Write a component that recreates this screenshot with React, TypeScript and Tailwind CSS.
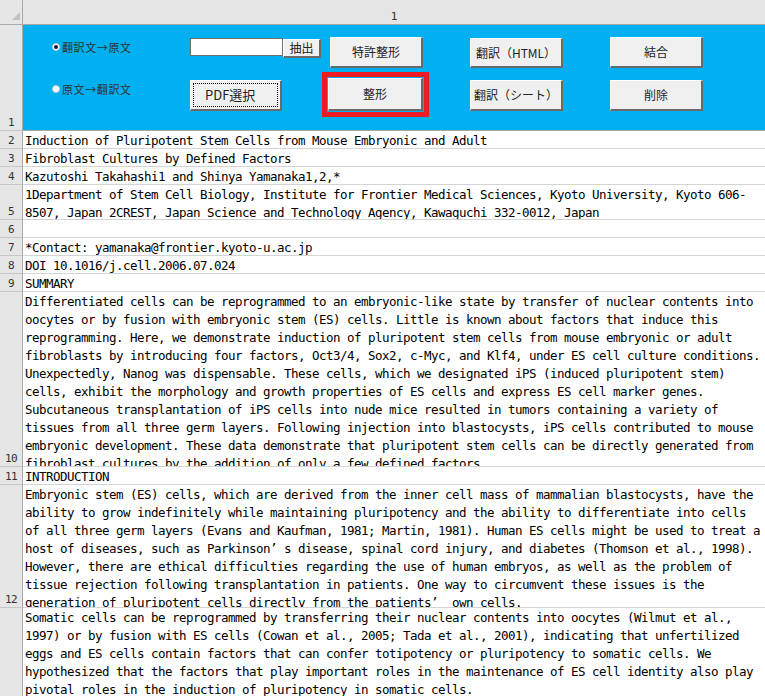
import React from 'react';

const summary = [
  'Differentiated cells can be reprogrammed to an embryonic-like state by transfer of nuclear contents into',
  'oocytes or by fusion with embryonic stem (ES) cells. Little is known about factors that induce this',
  'reprogramming. Here, we demonstrate induction of pluripotent stem cells from mouse embryonic or adult',
  'fibroblasts by introducing four factors, Oct3/4, Sox2, c-Myc, and Klf4, under ES cell culture conditions.',
  'Unexpectedly, Nanog was dispensable. These cells, which we designated iPS (induced pluripotent stem)',
  'cells, exhibit the morphology and growth properties of ES cells and express ES cell marker genes.',
  'Subcutaneous transplantation of iPS cells into nude mice resulted in tumors containing a variety of',
  'tissues from all three germ layers. Following injection into blastocysts, iPS cells contributed to mouse',
  'embryonic development. These data demonstrate that pluripotent stem cells can be directly generated from',
  'fibroblast cultures by the addition of only a few defined factors.',
];

const intro1 = [
  'Embryonic stem (ES) cells, which are derived from the inner cell mass of mammalian blastocysts, have the',
  'ability to grow indefinitely while maintaining pluripotency and the ability to differentiate into cells',
  'of all three germ layers (Evans and Kaufman, 1981; Martin, 1981). Human ES cells might be used to treat a',
  'host of diseases, such as Parkinson’ s disease, spinal cord injury, and diabetes (Thomson et al., 1998).',
  'However, there are ethical difficulties regarding the use of human embryos, as well as the problem of',
  'tissue rejection following transplantation in patients. One way to circumvent these issues is the',
  'generation of pluripotent cells directly from the patients’  own cells.',
];

const intro2 = [
  'Somatic cells can be reprogrammed by transferring their nuclear contents into oocytes (Wilmut et al.,',
  '1997) or by fusion with ES cells (Cowan et al., 2005; Tada et al., 2001), indicating that unfertilized',
  'eggs and ES cells contain factors that can confer totipotency or pluripotency to somatic cells. We',
  'hypothesized that the factors that play important roles in the maintenance of ES cell identity also play',
  'pivotal roles in the induction of pluripotency in somatic cells.',
];

const rows: { n: number; h: string; lines: string[] }[] = [
  { n: 2, h: 'h-[18px]', lines: ['Induction of Pluripotent Stem Cells from Mouse Embryonic and Adult'] },
  { n: 3, h: 'h-[18px]', lines: ['Fibroblast Cultures by Defined Factors'] },
  { n: 4, h: 'h-[18px]', lines: ['Kazutoshi Takahashi1 and Shinya Yamanaka1,2,*'] },
  {
    n: 5,
    h: 'h-[35px]',
    lines: [
      '1Department of Stem Cell Biology, Institute for Frontier Medical Sciences, Kyoto University, Kyoto 606-',
      '8507, Japan 2CREST, Japan Science and Technology Agency, Kawaguchi 332-0012, Japan',
    ],
  },
  { n: 6, h: 'h-[18px]', lines: [''] },
  { n: 7, h: 'h-[18px]', lines: ['*Contact: yamanaka@frontier.kyoto-u.ac.jp'] },
  { n: 8, h: 'h-[18px]', lines: ['DOI 10.1016/j.cell.2006.07.024'] },
  { n: 9, h: 'h-[18px]', lines: ['SUMMARY'] },
  { n: 10, h: 'h-[175px]', lines: summary },
  { n: 11, h: 'h-[18px]', lines: ['INTRODUCTION'] },
  { n: 12, h: 'h-[123px]', lines: intro1 },
  { n: 13, h: 'h-[120px]', lines: intro2 },
];

const Btn = ({ label, className }: { label: string; className: string }) => (
  <div
    className={`flex items-center justify-center bg-[#f0f0f0] border-t border-l border-t-white border-l-white border-r-2 border-b-2 border-r-[#6a6a6a] border-b-[#6a6a6a] text-[12px] text-[#222] font-['Noto_Sans_CJK_JP',sans-serif] ${className}`}
  >
    {label}
  </div>
);

const Radio = ({ label, checked }: { label: string; checked?: boolean }) => (
  <div className="flex items-center gap-[2px] h-[16px]">
    <div className="w-[8px] h-[8px] rounded-full bg-white border border-[#c8c8c8] flex items-center justify-center">
      {checked && <div className="w-[4px] h-[4px] rounded-full bg-[#101030]" />}
    </div>
    <span className="text-[11px] tracking-[0.6px] text-[#333] font-['Noto_Sans_CJK_JP',sans-serif] leading-none">
      {label}
    </span>
  </div>
);

const RowHead = ({ n, className = '' }: { n: number; className?: string }) => (
  <div
    className={`w-[23px] shrink-0 bg-[#e6e6e6] border-r border-r-[#a8a8a8] border-b border-b-[#c6c6c6] flex items-end justify-center pb-[2px] text-[11px] leading-none text-[#333] font-['DejaVu_Sans_Mono',monospace] tracking-[-0.5px] ${className}`}
  >
    {n}
  </div>
);

export default function App() {
  return (
    <div className="w-[765px] h-[696px] overflow-hidden bg-white flex flex-col">
      {/* column header */}
      <div className="flex h-[25px] shrink-0">
        <div className="w-[23px] shrink-0 bg-[#e6e6e6] border-r border-b border-[#a8a8a8] flex items-start justify-end pt-[12px] pr-[2px]">
          <svg width="8" height="8" viewBox="0 0 8 8">
            <polygon points="8,0 8,8 0,8" fill="#c2c2c2" />
          </svg>
        </div>
        <div className="flex-1 bg-[#e6e6e6] border-b border-[#a8a8a8] flex items-end justify-center pb-[2px] text-[11px] leading-none text-[#333] font-['DejaVu_Sans_Mono',monospace]">
          1
        </div>
      </div>

      {/* row 1: control panel */}
      <div className="flex h-[106px] shrink-0">
        <RowHead n={1} className="border-b-[#a8a8a8]" />
        <div className="flex-1 bg-[#00b0f0] border-b border-[#a8a8a8] flex items-start pl-[29px]">
          <div className="w-[138px] flex flex-col gap-[26px] pt-[14px]">
            <Radio label="翻訳文→原文" checked />
            <Radio label="原文→翻訳文" />
          </div>
          <div className="w-[131px] flex flex-col pt-[13px]">
            <div className="flex h-[18px]">
              <div className="w-[93px] h-[18px] bg-white border border-[#6d6d6d]" />
              <Btn label="抽出" className="w-[38px] h-[19px] mt-[1px]" />
            </div>
            <div className="mt-[24px] w-[92px] h-[31px] flex bg-[#f0f0f0] border-t border-l border-t-white border-l-white border-r-2 border-b-2 border-r-[#6a6a6a] border-b-[#6a6a6a] p-[2px]">
              <div className="flex-1 border border-dotted border-black flex items-center pl-[11px] text-[13px] text-[#222] font-['Noto_Sans_CJK_JP',sans-serif]">
                PDF選択
              </div>
            </div>
          </div>
          <div className="ml-[1px] w-[107px] flex flex-col pt-[12px]">
            <Btn label="特許整形" className="ml-[8px] w-[93px] h-[31px]" />
            <div className="mt-[4px] w-[107px] h-[45px] border-[5px] border-[#ed1c24] p-[1px] flex">
              <Btn label="整形" className="flex-1" />
            </div>
          </div>
          <div className="ml-[41px] w-[93px] flex flex-col gap-[12px] pt-[13px]">
            <Btn label="翻訳（HTML）" className="w-[93px] h-[30px]" />
            <Btn label="翻訳（シート）" className="w-[93px] h-[31px]" />
          </div>
          <div className="ml-[47px] w-[93px] flex flex-col gap-[12px] pt-[12px]">
            <Btn label="結合" className="w-[93px] h-[31px]" />
            <Btn label="削除" className="w-[93px] h-[31px]" />
          </div>
        </div>
      </div>

      {rows.map((r) => (
        <div key={r.n} className={`flex shrink-0 ${r.h}`}>
          <RowHead n={r.n} />
          <div className="flex-1 min-w-0 border-b border-[#d4d4d4] overflow-hidden pl-[2px] pt-[1px] text-[12.5px] leading-[18px] tracking-[-0.525px] text-black whitespace-pre font-['DejaVu_Sans_Mono',monospace]">
            {r.lines.map((l, i) => (
              <div key={i} className="h-[18px]">
                {l}
              </div>
            ))}
          </div>
        </div>
      ))}
    </div>
  );
}
